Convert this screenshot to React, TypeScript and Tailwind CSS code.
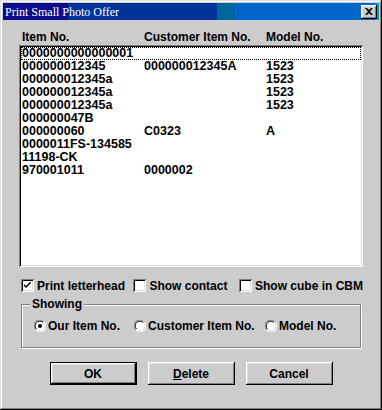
import React from "react";

const raised =
  "shadow-[inset_-1px_-1px_#000000,inset_1px_1px_#ffffff,inset_-2px_-2px_#808080,inset_2px_2px_#dfdfdf]";
const sunken =
  "shadow-[inset_1px_1px_#808080,inset_-1px_-1px_#ffffff,inset_2px_2px_#000000,inset_-2px_-2px_#dfdfdf]";

const rows: [string, string, string][] = [
  ["0000000000000001", "", ""],
  ["000000012345", "000000012345A", "1523"],
  ["000000012345a", "", "1523"],
  ["000000012345a", "", "1523"],
  ["000000012345a", "", "1523"],
  ["000000047B", "", ""],
  ["000000060", "C0323", "A"],
  ["0000011FS-134585", "", ""],
  ["11198-CK", "", ""],
  ["970001011", "0000002", ""],
];

function CheckBox({ checked }: { checked?: boolean }) {
  return (
    <div className={`w-[13px] h-[13px] bg-white ${sunken} flex items-center justify-center shrink-0`}>
      {checked && (
        <svg width="7" height="7" viewBox="0 0 7 7">
          <path d="M0 2 L0 4 L2 6 L7 1 L7 -1 L2 4 Z" fill="#000" />
        </svg>
      )}
    </div>
  );
}

function Radio({ checked }: { checked?: boolean }) {
  return (
    <svg width="12" height="12" viewBox="0 0 12 12" className="shrink-0">
      <circle cx="6" cy="6" r="5.5" fill="#ffffff" />
      <path d="M1.5 9.5 A5.5 5.5 0 0 1 9.5 1.5" stroke="#808080" strokeWidth="1" fill="none" />
      <path d="M2.5 9 A4.5 4.5 0 0 1 9 2.5" stroke="#000" strokeWidth="1" fill="none" />
      <path d="M10.5 2.5 A5.5 5.5 0 0 1 2.5 10.5" stroke="#ffffff" strokeWidth="1" fill="none" />
      <path d="M9.5 3 A4.5 4.5 0 0 1 3 9.5" stroke="#dfdfdf" strokeWidth="1" fill="none" />
      {checked && <circle cx="6" cy="6" r="2" fill="#000" />}
    </svg>
  );
}

function Button({ children, def }: { children: React.ReactNode; def?: boolean }) {
  if (def) {
    return (
      <div className="w-[87px] h-[23px] border border-black">
        <div className={`w-full h-full ${raised} flex items-center justify-center`}>{children}</div>
      </div>
    );
  }
  return (
    <div className={`w-[87px] h-[23px] ${raised} flex items-center justify-center`}>{children}</div>
  );
}

export default function App() {
  return (
    <div
      className="w-[382px] h-[410px] bg-[#cccccc] p-[3px] flex flex-col whitespace-nowrap shadow-[inset_-1px_-1px_#000000,inset_1px_1px_#dfdfdf,inset_-2px_-2px_#808080,inset_2px_2px_#ffffff]"
      style={{ fontFamily: '"Liberation Sans", Arial, sans-serif' }}
    >
      {/* Title bar */}
      <div className="h-[17px] flex items-center justify-between pl-[2px] pr-[2px] bg-[linear-gradient(to_right,#0c0c8c_0px,#0c0c8c_65px,#003399_65px,#003399_214px,#006699_214px,#006699_232px,#0066cc_232px,#0066cc_372px,#0099cc_372px)]">
        <span
          className="text-white text-[12px] leading-none"
          style={{ fontFamily: '"Liberation Serif", "Times New Roman", serif' }}
        >
          Print Small Photo Offer
        </span>
        <div className={`w-[16px] h-[14px] bg-[#cccccc] ${raised} flex items-center justify-center`}>
          <svg width="8" height="7" viewBox="0 0 8 7">
            <path d="M0 0 L2 0 L4 2 L6 0 L8 0 L5 3.5 L8 7 L6 7 L4 5 L2 7 L0 7 L3 3.5 Z" fill="#000" />
          </svg>
        </div>
      </div>

      {/* Body */}
      <div className="flex flex-col pl-[16px] pr-[16px] text-[12px] font-bold text-black">
        <div className="grid grid-cols-[122px_122px_1fr] pl-[3px] mt-[10px] leading-[14px]">
          <span>Item No.</span>
          <span>Customer Item No.</span>
          <span>Model No.</span>
        </div>

        <div className={`mt-[1px] w-[344px] h-[222px] bg-white ${sunken} p-[2px]`}>
          {rows.map((r, i) => (
            <div
              key={i}
              className={`grid grid-cols-[122px_122px_1fr] pl-[1px] h-[13px] leading-[13px] ${
                i === 0 ? "outline outline-1 outline-dotted outline-black -outline-offset-1" : ""
              }`}
            >
              <span className="text-[12.5px]">{r[0]}</span>
              <span className="text-[12.5px]">{r[1]}</span>
              <span className="text-[12.5px]">{r[2]}</span>
            </div>
          ))}
        </div>

        {/* Checkboxes */}
        <div className="flex items-center mt-[12px] pl-[2px] h-[13px]">
          <CheckBox checked />
          <span className="ml-[3px] w-[98px]">Print letterhead</span>
          <CheckBox />
          <span className="ml-[3px] w-[91px]">Show contact</span>
          <CheckBox />
          <span className="ml-[3px]">Show cube in CBM</span>
        </div>

        {/* Group box */}
        <div className="relative mt-[12px] ml-[2px] w-[340px] h-[44px] border border-[#808080] shadow-[1px_1px_#ffffff,inset_1px_1px_#ffffff]">
          <span className="absolute -top-[8px] left-[8px] bg-[#cccccc] px-[2px] leading-[14px]">Showing</span>
          <div className="flex items-center mt-[14px] pl-[12px] h-[13px]">
            <Radio checked />
            <span className="ml-[2px] w-[86px]">Our Item No.</span>
            <Radio />
            <span className="ml-[2px] w-[117px]">Customer Item No.</span>
            <Radio />
            <span className="ml-[2px]">Model No.</span>
          </div>
        </div>

        {/* Buttons */}
        <div className="flex justify-center gap-[11px] mt-[14px] -ml-[16px] -mr-[16px]">
          <Button def>OK</Button>
          <Button>
            <span>
              <span className="underline">D</span>elete
            </span>
          </Button>
          <Button>Cancel</Button>
        </div>
      </div>
    </div>
  );
}
